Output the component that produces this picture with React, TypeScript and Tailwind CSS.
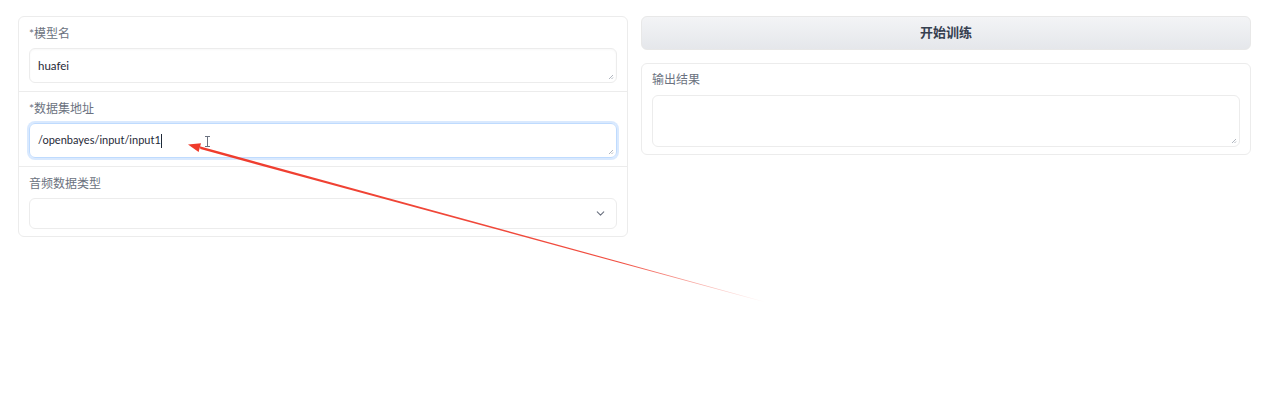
import { ChevronDown } from "lucide-react";

const font = { fontFamily: 'Lato, "Noto Sans CJK SC", sans-serif' };

function Field({ label, children, last }: { label: string; children: React.ReactNode; last?: boolean }) {
    return (
        <div className={`px-[10px] pt-[9px] ${last ? "pb-[7px]" : "pb-[8px] border-b border-[#ececec]"}`}>
            <div className="text-[12px] leading-[16px] text-[#6b7280] mb-[6px]">{label}</div>
            {children}
        </div>
    );
}

function Grip() {
    return (
        <svg className="absolute right-[2px] bottom-[2px]" width="6" height="6" viewBox="0 0 6 6">
            <path d="M5 1L1 5M5 3.5L3.5 5" stroke="#9ca3af" strokeWidth="0.8" />
        </svg>
    );
}

export default function App() {
    return (
        <div className="relative w-[1280px] h-[399px] bg-white overflow-hidden" style={font}>
            <div className="flex gap-[13px] px-[18px] pt-[16px] items-start">
                {/* left column */}
                <div className="w-[610px] border border-[#ececec] rounded-[6px] bg-white">
                    <Field label="*模型名">
                        <div className="relative h-[35px] rounded-[6px] border border-[#ececec] shadow-[inset_0_1px_2px_rgba(0,0,0,0.03)] flex items-center px-[8px] text-[11.5px] text-[#1f2937]">
                            huafei
                            <Grip />
                        </div>
                    </Field>
                    <Field label="*数据集地址">
                        <div className="relative h-[35px] rounded-[6px] border border-[#bfdbfe] shadow-[0_0_0_2px_rgba(191,219,254,0.6)] flex items-center px-[8px] text-[11px] text-[#1f2937]">
                            <span>/openbayes/input/input1</span>
                            <span className="inline-block w-px h-[14px] bg-[#1f2937]" />
                            <Grip />
                        </div>
                    </Field>
                    <Field label="音频数据类型" last>
                        <div className="h-[31px] rounded-[6px] border border-[#ececec] flex items-center justify-end pr-[9px]">
                            <ChevronDown size={13} strokeWidth={2} className="text-[#6b7280]" />
                        </div>
                    </Field>
                </div>

                {/* right column */}
                <div className="w-[610px] flex flex-col gap-[13px]">
                    <button className="h-[34px] rounded-[6px] bg-gradient-to-b from-[#f3f4f6] to-[#e5e7eb] border border-[#e8e8e8] text-[13px] font-bold text-[#374151]">
                        开始训练
                    </button>
                    <div className="border border-[#ececec] rounded-[6px] px-[10px] pt-[8px] pb-[7px]">
                        <div className="text-[12px] leading-[16px] text-[#6b7280] mb-[7px]">输出结果</div>
                        <div className="relative h-[52px] rounded-[6px] border border-[#ececec]">
                            <Grip />
                        </div>
                    </div>
                </div>
            </div>

            {/* text cursor */}
            <svg className="absolute left-[204px] top-[136px]" width="7" height="11" viewBox="0 0 7 11">
                <path d="M1 0.5h5M3.5 0.5v10M1 10.5h5" stroke="#6b7280" strokeWidth="1" fill="none" />
            </svg>

            {/* annotation arrow */}
            <svg className="absolute left-0 top-0 pointer-events-none" width="1280" height="399">
                <defs>
                    <linearGradient id="fade" gradientUnits="userSpaceOnUse" x1="190" y1="145" x2="765" y2="302">
                        <stop offset="0" stopColor="#ef3b2c" stopOpacity="1" />
                        <stop offset="0.75" stopColor="#ef3b2c" stopOpacity="0.9" />
                        <stop offset="1" stopColor="#ef3b2c" stopOpacity="0" />
                    </linearGradient>
                </defs>
                <polygon points="199.6,146.2 200.4,149.1 765.1,302.3 765,301.7" fill="url(#fade)" />
                <polygon points="188,144.5 201,143.2 198.6,152" fill="#ef3b2c" />
            </svg>
        </div>
    );
}
